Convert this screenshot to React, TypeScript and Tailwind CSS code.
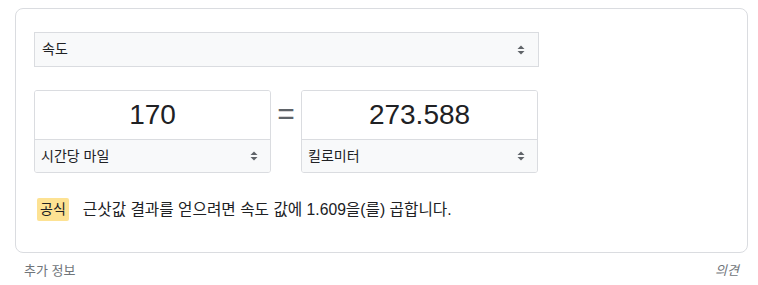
function Arrows() {
  return (
    <svg width="8" height="12" viewBox="0 0 8 12" className="shrink-0">
      <path d="M0.5 5 L4 1.5 L7.5 5 Z" fill="#5f6368" />
      <path d="M0.5 7 L4 10.5 L7.5 7 Z" fill="#5f6368" />
    </svg>
  )
}

function UnitBox({ value, unit }: { value: string; unit: string }) {
  return (
    <div className="w-[237px] h-[83px] flex flex-col border border-[#dadce0] rounded-[3px] overflow-hidden">
      <div className="h-[48px] flex items-center justify-center text-[28px] text-[#202124] bg-white">
        {value}
      </div>
      <div className="flex-1 flex items-center justify-between pl-[6px] pr-[12px] bg-[#f8f9fa] border-t border-[#dadce0] text-[14px] text-[#202124]">
        <span>{unit}</span>
        <Arrows />
      </div>
    </div>
  )
}

export default function App() {
  return (
    <div
      className="w-[758px] h-[285px] bg-white px-[15px] pt-[8px]"
      style={{ fontFamily: '"Liberation Sans", Arial, "Noto Sans CJK KR", sans-serif' }}
    >
      <div className="w-[733px] h-[245px] border border-[#dadce0] rounded-[8px] pl-[18px] pt-[23px]">
        <div className="w-[505px] h-[35px] flex items-center justify-between bg-[#f8f9fa] border border-[#dadce0] pl-[7px] pr-[13px] text-[14px] text-[#202124]">
          <span>속도</span>
          <Arrows />
        </div>

        <div className="mt-[23px] flex items-start">
          <UnitBox value="170" unit="시간당 마일" />
          <div className="w-[30px] h-[46px] flex items-center justify-center text-[30px] text-[#5f6368]">=</div>
          <UnitBox value="273.588" unit="킬로미터" />
        </div>

        <div className="mt-[25px] ml-[3px] flex items-center text-[#202124]">
          <span className="bg-[#fde293] px-[3px] py-[1px] rounded-[2px] text-[14px] text-[#202124]">공식</span>
          <span className="ml-[14px] text-[15.7px]">근삿값 결과를 얻으려면 속도 값에 1.609을(를) 곱합니다.</span>
        </div>
      </div>

      <div className="flex justify-between pl-[9px] pr-[4px] mt-[8px] text-[13px] text-[#70757a]">
        <span>추가 정보</span>
        <span className="italic">의견</span>
      </div>
    </div>
  )
}
